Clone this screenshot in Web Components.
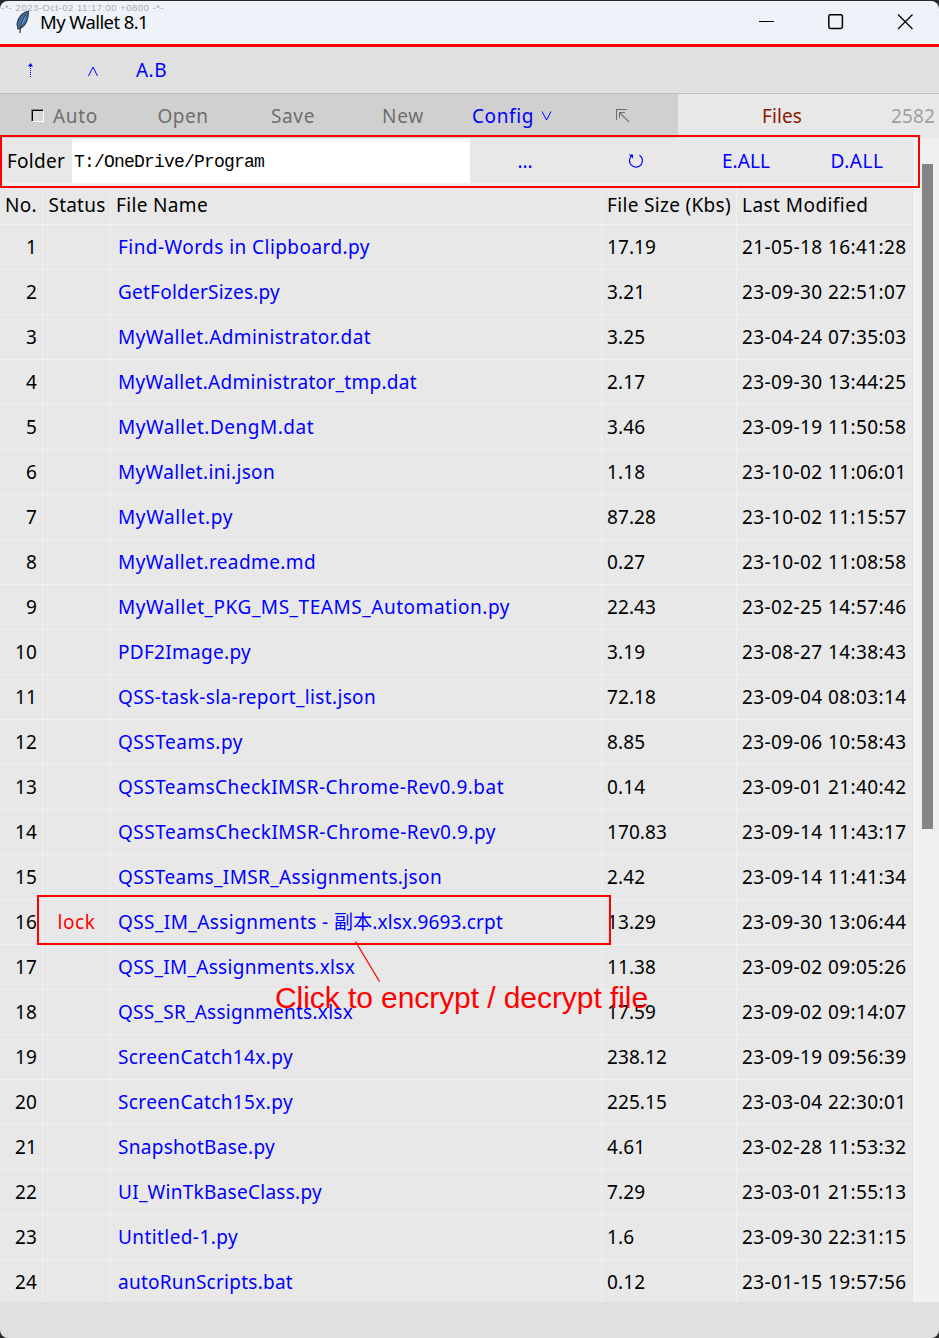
<!DOCTYPE html>
<html lang="en">
<head>
<meta charset="utf-8">
<title>My Wallet 8.1</title>
<style>
  body { margin: 0; background: #2a2a2c; font-family: "Noto Sans", "Noto Sans CJK SC", sans-serif; font-size: 19px; color: #000; }
</style>
</head>
<body>
<wallet-app></wallet-app>
<script>
// Text run whose tracking is adjusted so that it spans a given width.
class FitText extends HTMLElement {
  connectedCallback() {
    const root = this.attachShadow({ mode: 'open' });
    root.innerHTML = '<style>:host{display:inline-block;white-space:pre;line-height:26px}span{display:inline-block}</style><span><slot></slot></span>';
    const span = root.querySelector('span');
    const target = parseFloat(this.getAttribute('w'));
    if (!target) return;
    const n = [...this.textContent].length;
    const now = span.getBoundingClientRect().width;
    span.style.letterSpacing = ((target - now) / n).toFixed(3) + 'px';
  }
}

class TitleBar extends HTMLElement {
  connectedCallback() {
    this.attachShadow({ mode: 'open' }).innerHTML = `
    <style>
      :host{display:flex;align-items:center;box-sizing:border-box;background:#eef3f9;border-bottom:3px solid #f00;height:46px;position:relative;border-radius:8px 8px 0 0;padding-left:14px}
      .stamp{position:absolute;left:1px;top:-1px;font:9.5px/15px "Liberation Sans",sans-serif;color:#a9acb0}
      fit-text{margin-left:9px;margin-bottom:1px}
      .name{font-size:18.5px}
      .win{margin-left:auto;display:flex;gap:53px;padding-right:26px;margin-bottom:2px}
      svg{display:block}
      .logo{margin-bottom:3px}
    </style>
    <svg class="logo" width="17" height="25" viewBox="0 0 17 25"><path d="M14.500 2C9 3 4 8 3 15l1 5 3-1c5-3 7.500-9 7.500-17z" fill="#3a6ea5" stroke="#3a4148" stroke-width="1.200"/><path d="M12 4C8 8 6 13 6 17c4-3 6-8 6-13z" fill="#62a5e2"/><path d="M12 5C8 10 6 16 6 24" fill="none" stroke="#30363b" stroke-width="1.200"/></svg>
    <div class="stamp"><fit-text style="margin:0;line-height:15px" w="163">-*- 2023-Oct-02 11:17:00 +0800 -*-</fit-text></div>
    <fit-text class="name" w="108">My Wallet 8.1</fit-text>
    <div class="win">
      <svg width="16" height="16"><path d="M0 7.500h15" stroke="#000"/></svg>
      <svg width="16" height="16"><rect x=".8" y=".8" width="13.600" height="13.600" rx="1.600" fill="none" stroke="#000" stroke-width="1.500"/></svg>
      <svg width="16" height="16"><path d="M1 .5l14.500 14.500M15.500 .5L1 15" stroke="#000" stroke-width="1.300"/></svg>
    </div>`;
  }
}

class ToolRow extends HTMLElement {
  connectedCallback() {
    this.attachShadow({ mode: 'open' }).innerHTML = `
    <style>
      :host{display:grid;grid-template-columns:62px 62px 1fr;align-items:center;height:47px;box-sizing:border-box;border-bottom:1px solid #c0c0c0;background:#e0e0e0;color:#00f}
      svg{justify-self:center;display:block}
      .up{margin-right:1px}
      fit-text{margin-left:12px}
    </style>
    <svg class="up" width="7" height="16"><path d="M3.500 4v12" stroke="#00f" stroke-dasharray="1 1"/><path d="M3.500 1L6 4.500H1z" fill="#00f"/></svg>
    <svg width="12" height="12" style="margin-top:2px"><path d="M1.500 11L6 2l4.500 9" fill="none" stroke="#00f" stroke-width="1"/></svg>
    <fit-text w="31">A.B</fit-text>`;
  }
}

class MenuRow extends HTMLElement {
  connectedCallback() {
    this.attachShadow({ mode: 'open' }).innerHTML = `
    <style>
      :host{display:grid;grid-template-columns:128px 110px 110px 110px 110px 110px 1fr;height:44px;background:#d0d0d0;color:#6e6e6e}
      div{display:flex;align-items:center;justify-content:center}
      .auto{justify-content:flex-start;padding-left:31px;gap:9px}
      i{width:13px;height:13px;box-sizing:border-box;border:1px solid;border-color:#808080 #fff #fff #808080;box-shadow:inset 1px 1px #000;background:#d8d8d8;margin-bottom:2px}
      .cfg{color:#00f;gap:7px;padding-right:2px}
      .files{background:#e8e8e8;color:#8b1a00;position:relative;padding-right:53px}
      .files .n{position:absolute;right:4px;top:9px;color:#a0a0a0}
    </style>
    <div class="auto"><i></i><fit-text w="45">Auto</fit-text></div>
    <div><fit-text w="51">Open</fit-text></div>
    <div><fit-text w="44">Save</fit-text></div>
    <div><fit-text w="42">New</fit-text></div>
    <div class="cfg"><fit-text w="62">Config</fit-text><svg width="11" height="12"><path d="M1 1.500L5.500 10 10 1.500" fill="none" stroke="#00f"/></svg></div>
    <div><svg width="14" height="14"><path d="M.5 11V.5H11M3.500 9V3.500H9M3.500 3.500L13 13" fill="none" stroke="#707070" stroke-width="1.100"/></svg></div>
    <div class="files"><fit-text w="40">Files</fit-text><fit-text class="n" w="44">2582</fit-text></div>`;
  }
}

class FolderBar extends HTMLElement {
  connectedCallback() {
    this.attachShadow({ mode: 'open' }).innerHTML = `
    <style>
      :host{display:grid;grid-template-columns:72px 398px 110px 111px 110px 112px;height:47px;padding-top:1px;box-sizing:border-box;border-bottom:2px solid #f0f0f0;color:#00f}
      div{display:flex;align-items:center;justify-content:center}
      .l{color:#000;justify-content:flex-start;padding-left:7px}
      .in{background:#fff;color:#000;justify-content:flex-start;padding:1px 0 0 2px;font-family:"Liberation Mono",monospace;font-size:18px}
    </style>
    <div class="l"><fit-text w="58">Folder</fit-text></div>
    <div class="in"><fit-text w="190">T:/OneDrive/Program</fit-text></div>
    <div><fit-text w="15">...</fit-text></div>
    <div><svg width="16" height="16"><path d="M11.500 2.200A6.500 6.500 0 1 1 4 2.500" fill="none" stroke="#00f" stroke-width="1.200"/><path d="M.8 1.500H5V5.500z" fill="#00f"/></svg></div>
    <div><fit-text w="48">E.ALL</fit-text></div>
    <div><fit-text w="53">D.ALL</fit-text></div>`;
  }
}

class FileRow extends HTMLElement {
  connectedCallback() {
    this.attachShadow({ mode: 'open' }).innerHTML = `
    <style>
      :host{display:grid;grid-template-columns:43px 68px 491px 135px 175px;height:45px;width:912px}
      div{box-sizing:border-box;border-right:1px solid #f0f0f0;border-bottom:1px solid #f0f0f0;display:flex;align-items:center;padding-left:5px;min-width:0}
      div:last-child{border-right:0}
      .no{justify-content:flex-end;padding:0 5px 0 0}
      .st{justify-content:center;padding:0;color:#f00}
      .nm{color:#00f;padding-left:7px}
      :host([head]){height:40px}
      :host([head]) div{color:#000;padding:1px 0 0 5px}
      :host([head]) .no{padding:1px 5px 0 0}
      :host([head]) .st{padding:1px 0 0 1px}
    </style>
    <div class="no"><slot name="no"></slot></div><div class="st"><slot name="st"></slot></div><div class="nm"><slot name="nm"></slot></div><div><slot name="sz"></slot></div><div><slot name="dt"></slot></div>`;
  }
}

const FILES = [
  ['Find-Words in Clipboard.py',369,'17.19','21-05-18 16:41:28'],
  ['GetFolderSizes.py',279,'3.21','23-09-30 22:51:07'],
  ['MyWallet.Administrator.dat',370,'3.25','23-04-24 07:35:03'],
  ['MyWallet.Administrator_tmp.dat',416,'2.17','23-09-30 13:44:25'],
  ['MyWallet.DengM.dat',313,'3.46','23-09-19 11:50:58'],
  ['MyWallet.ini.json',274,'1.18','23-10-02 11:06:01'],
  ['MyWallet.py',232,'87.28','23-10-02 11:15:57'],
  ['MyWallet.readme.md',315,'0.27','23-10-02 11:08:58'],
  ['MyWallet_PKG_MS_TEAMS_Automation.py',509,'22.43','23-02-25 14:57:46'],
  ['PDF2Image.py',250,'3.19','23-08-27 14:38:43'],
  ['QSS-task-sla-report_list.json',375,'72.18','23-09-04 08:03:14'],
  ['QSSTeams.py',242,'8.85','23-09-06 10:58:43'],
  ['QSSTeamsCheckIMSR-Chrome-Rev0.9.bat',503,'0.14','23-09-01 21:40:42'],
  ['QSSTeamsCheckIMSR-Chrome-Rev0.9.py',495,'170.83','23-09-14 11:43:17'],
  ['QSSTeams_IMSR_Assignments.json',441,'2.42','23-09-14 11:41:34'],
  ['QSS_IM_Assignments - 副本.xlsx.9693.crpt',502,'13.29','23-09-30 13:06:44'],
  ['QSS_IM_Assignments.xlsx',354,'11.38','23-09-02 09:05:26'],
  ['QSS_SR_Assignments.xlsx',352,'17.59','23-09-02 09:14:07'],
  ['ScreenCatch14x.py',292,'238.12','23-09-19 09:56:39'],
  ['ScreenCatch15x.py',292,'225.15','23-03-04 22:30:01'],
  ['SnapshotBase.py',274,'4.61','23-02-28 11:53:32'],
  ['UI_WinTkBaseClass.py',321,'7.29','23-03-01 21:55:13'],
  ['Untitled-1.py',237,'1.6','23-09-30 22:31:15'],
  ['autoRunScripts.bat',292,'0.12','23-01-15 19:57:56']
];

class FileTable extends HTMLElement {
  connectedCallback() {
    const cell = (slot, w, t) => `<fit-text slot="${slot}" w="${w}">${t}</fit-text>`;
    const sizeWidth = s => (s.length - 1) * 10.9 + 5.4;
    // A name with Chinese characters is tracked in two runs, since their glyphs are full width.
    const name = (n, end) => {
      const at = n.search(/[\u4e00-\u9fff]/);
      if (at < 0) return cell('nm', end - 118 + 1, n);
      return cell('nm', 216, n.slice(0, at)) + cell('nm', end - 334 + 1, n.slice(at));
    };
    const rows = FILES.map(([n, end, s, d], i) => `<file-row>${cell('no', String(i + 1).length * 10.95, i + 1)}${i === 15 ? cell('st', 38, 'lock') : ''}${name(n, end)}${cell('sz', sizeWidth(s), s)}${cell('dt', 164.5, d)}</file-row>`).join('');
    this.attachShadow({ mode: 'open' }).innerHTML = `
    <style>:host{display:block;height:1117px;overflow:hidden}</style>
    <file-row head>${cell('no', 32, 'No.')}${cell('st', 57, 'Status')}${cell('nm', 92, 'File Name')}${cell('sz', 124, 'File Size (Kbs)')}${cell('dt', 126.5, 'Last Modified')}</file-row>${rows}`;
  }
}

class ScrollTrack extends HTMLElement {
  connectedCallback() {
    this.attachShadow({ mode: 'open' }).innerHTML = `
    <style>:host{display:block;background:#f0f0f0;padding:26px 6px 0 7px}div{height:665px;background:#858585}</style><div></div>`;
  }
}

class MarkNotes extends HTMLElement {
  connectedCallback() {
    this.attachShadow({ mode: 'open' }).innerHTML = `
    <style>
      :host{position:absolute;inset:0;pointer-events:none}
      div{position:absolute;box-sizing:border-box;border:2px solid #f00}
      .a{left:0;top:135px;width:920px;height:53px}
      .b{left:37px;top:895px;width:574px;height:50px}
      svg{position:absolute;left:350px;top:936px}
      fit-text{position:absolute;left:275px;top:981px;line-height:34px;font-family:"Liberation Sans",sans-serif;font-size:30px;color:#f00}
    </style>
    <div class="a"></div><div class="b"></div>
    <svg width="36" height="50"><path d="M5.500 5.500L29.500 45.500" stroke="#f00" stroke-width="1.300"/></svg>
    <fit-text w="373">Click to encrypt / decrypt file</fit-text>`;
  }
}

class WalletApp extends HTMLElement {
  connectedCallback() {
    this.attachShadow({ mode: 'open' }).innerHTML = `
    <style>
      :host{display:flex;flex-direction:column;position:relative;height:1338px;width:939px;padding-top:1px;box-sizing:border-box;overflow:hidden}
      .mid{display:grid;grid-template-columns:914px 1px 24px;height:1164px;background:#e8e8e8}
      .sep{background:#fff}
      .foot{flex:1;background:#e0e0e0;border-radius:0 0 8px 8px}
    </style>
    <title-bar></title-bar><tool-row></tool-row><menu-row></menu-row>
    <div class="mid"><main><folder-bar></folder-bar><file-table></file-table></main><div class="sep"></div><scroll-track></scroll-track></div>
    <div class="foot"></div><mark-notes></mark-notes>`;
  }
}

customElements.define('fit-text', FitText);
customElements.define('title-bar', TitleBar);
customElements.define('tool-row', ToolRow);
customElements.define('menu-row', MenuRow);
customElements.define('folder-bar', FolderBar);
customElements.define('file-row', FileRow);
customElements.define('file-table', FileTable);
customElements.define('scroll-track', ScrollTrack);
customElements.define('mark-notes', MarkNotes);
customElements.define('wallet-app', WalletApp);
</script>
</body>
</html>
